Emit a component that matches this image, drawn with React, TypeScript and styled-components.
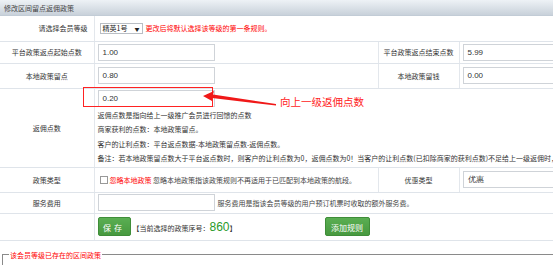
import React from 'react'
import styled, { createGlobalStyle } from 'styled-components'

const GlobalStyle = createGlobalStyle`
  html, body {
    margin: 0;
    padding: 0;
    background: #fff;
    overflow: hidden;
  }
  body {
    font-family: "Noto Sans CJK SC", "Liberation Sans", sans-serif;
    color: #333;
  }
`

const Page = styled.div`
  position: relative;
  width: 553px;
  height: 265px;
  overflow: hidden;
`

const Header = styled.div`
  height: 16px;
  line-height: 16px;
  padding-left: 4px;
  font-size: 7px;
  color: #444;
  background: linear-gradient(#eef2f6, #c8d1da);
  border-bottom: 1px solid #c2ccd6;
  box-sizing: border-box;
`

const Table = styled.table`
  width: 720px;
  border-collapse: collapse;
  table-layout: fixed;
  font-size: 7px;
`

const Row = styled.tr<{ h: number }>`
  height: ${p => p.h}px;
  & > td {
    border-bottom: 1px solid #dfe4ea;
  }
`

const LabelCell = styled.td<{ right?: boolean }>`
  text-align: ${p => (p.right ? 'right' : 'center')};
  padding: ${p => (p.right ? '0 6px 0 0' : '0')};
  border-right: 1px solid #e3e7ec;
  color: #333;
  vertical-align: middle;
`

const FieldCell = styled.td`
  padding: 0 0 0 3px;
  border-right: 1px solid #e3e7ec;
  vertical-align: middle;
  white-space: nowrap;
`

const Line = styled.div`
  display: flex;
  align-items: center;
  gap: 3px;
`

const Input = styled.div<{ w?: number }>`
  width: ${p => p.w ?? 117}px;
  height: 17px;
  line-height: 15px;
  box-sizing: border-box;
  border: 1px solid #cfd3d8;
  padding-left: 4px;
  font-family: "Liberation Sans", sans-serif;
  font-size: 8px;
  color: #333;
  background: #fff;
`

const Select = styled.div`
  width: 43px;
  height: 11px;
  margin-left: 2px;
  box-sizing: border-box;
  border: 1px solid #b9bec4;
  display: flex;
  align-items: center;
  justify-content: space-between;
  padding: 0 2px;
  font-size: 7px;
  color: #222;
`

const Red = styled.span<{ size?: number }>`
  color: #f00;
  font-size: ${p => p.size ?? 7}px;
`

const Note = styled.span`
  color: #444;
  font-size: 7px;
`

const Desc = styled.div`
  display: flex;
  flex-direction: column;
  margin-top: 1px;
  & > p {
    margin: 0;
    height: 14.5px;
    line-height: 14.5px;
    font-size: 7px;
    color: #333;
  }
`

const Check = styled.span`
  display: inline-block;
  width: 6px;
  height: 6px;
  border: 1px solid #999;
  margin: 0 2px 0 2px;
  background: #fff;
`

const Button = styled.div<{ w: number; ml?: number }>`
  width: ${p => p.w}px;
  height: 19px;
  margin-left: ${p => p.ml ?? 0}px;
  line-height: 19px;
  text-align: center;
  color: #fff;
  font-size: 8px;
  letter-spacing: ${p => (p.w < 40 ? '3px' : '0')};
  background: linear-gradient(#5aae52, #47993f);
  border: 1px solid #3f8d39;
  border-radius: 2px;
  box-sizing: border-box;
`

const Serial = styled.span`
  font-size: 7px;
  color: #333;
  margin-left: 2px;
  & > b {
    font-family: "Liberation Sans", sans-serif;
    font-weight: normal;
    font-size: 12px;
    color: #2a9a2a;
  }
`

const Fieldset = styled.fieldset`
  margin: 9px 0 0 2px;
  padding: 0;
  height: 40px;
  border: 1px solid #8a8a8a;
  border-right: none;
  border-bottom: none;
  width: 700px;
`

const Legend = styled.legend`
  margin-left: 6px;
  padding: 0 1px;
  font-size: 7px;
  color: #f00;
`

const Marker = styled.div`
  position: absolute;
  left: 83px;
  top: 87px;
  width: 130px;
  height: 20px;
  border: 1px solid #f22;
  box-sizing: border-box;
`

const Callout = styled.div`
  position: absolute;
  left: 280px;
  top: 94px;
  font-size: 10.5px;
  color: #f22;
`

const Arrow = () => (
  <svg
    width="80"
    height="20"
    viewBox="0 0 80 20"
    style={{ position: 'absolute', left: 200, top: 88 }}
  >
    <polygon points="3,8 14,3 13,6.5 76,16 76,17.5 12,10 12,13" fill="#f01818" />
  </svg>
)

export default function App() {
  return (
    <Page>
      <GlobalStyle />
      <Header>修改区间留点返佣政策</Header>
      <Table>
        <colgroup>
          <col style={{ width: 94 }} />
          <col style={{ width: 284 }} />
          <col style={{ width: 81 }} />
          <col />
        </colgroup>
        <tbody>
          <Row h={25}>
            <LabelCell right>请选择会员等级</LabelCell>
            <FieldCell colSpan={3} style={{ borderRight: 'none' }}>
              <Line>
                <Select>
                  <span>精英1号</span>
                  <span style={{ fontSize: 5 }}>▼</span>
                </Select>
                <Red>更改后将默认选择该等级的第一条规则。</Red>
              </Line>
            </FieldCell>
          </Row>
          <Row h={22}>
            <LabelCell>平台政策返点起始点数</LabelCell>
            <FieldCell><Input>1.00</Input></FieldCell>
            <LabelCell>平台政策返点结束点数</LabelCell>
            <FieldCell><Input w={200}>5.99</Input></FieldCell>
          </Row>
          <Row h={25}>
            <LabelCell>本地政策留点</LabelCell>
            <FieldCell><Input>0.80</Input></FieldCell>
            <LabelCell>本地政策留钱</LabelCell>
            <FieldCell><Input w={200}>0.00</Input></FieldCell>
          </Row>
          <Row h={79}>
            <LabelCell>返佣点数</LabelCell>
            <FieldCell colSpan={3} style={{ verticalAlign: 'top', paddingTop: 1 }}>
              <Input>0.20</Input>
              <Desc>
                <p>返佣点数是指向给上一级推广会员进行回馈的点数</p>
                <p>商家获利的点数：本地政策留点。</p>
                <p>客户的让利点数：平台返点数据-本地政策留点数-返佣点数。</p>
                <p>备注：若本地政策留点数大于平台返点数时，则客户的让利点数为0，返佣点数为0！当客户的让利点数(已扣除商家的获利点数)不足给上一级返佣时，返佣点数为0。</p>
              </Desc>
            </FieldCell>
          </Row>
          <Row h={25}>
            <LabelCell>政策类型</LabelCell>
            <FieldCell>
              <Line style={{ gap: 0 }}>
                <Check />
                <Red>忽略本地政策</Red>
                <Note>&nbsp;忽略本地政策指该政策规则不再适用于已匹配到本地政策的航段。</Note>
              </Line>
            </FieldCell>
            <LabelCell>优惠类型</LabelCell>
            <FieldCell><Input w={200}>优惠</Input></FieldCell>
          </Row>
          <Row h={21}>
            <LabelCell>服务费用</LabelCell>
            <FieldCell colSpan={3} style={{ borderRight: 'none' }}>
              <Line>
                <Input />
                <Note>服务费用是指该会员等级的用户预订机票时收取的额外服务费。</Note>
              </Line>
            </FieldCell>
          </Row>
          <Row h={27}>
            <LabelCell />
            <FieldCell colSpan={3} style={{ borderRight: 'none' }}>
              <Line style={{ gap: 0 }}>
                <Button w={33}>保存</Button>
                <Serial>【当前选择的政策序号：<b>860</b>】</Serial>
                <Button w={45} ml={88}>添加规则</Button>
              </Line>
            </FieldCell>
          </Row>
        </tbody>
      </Table>
      <Fieldset>
        <Legend>该会员等级已存在的区间政策</Legend>
      </Fieldset>
      <Marker />
      <Arrow />
      <Callout>向上一级返佣点数</Callout>
    </Page>
  )
}
